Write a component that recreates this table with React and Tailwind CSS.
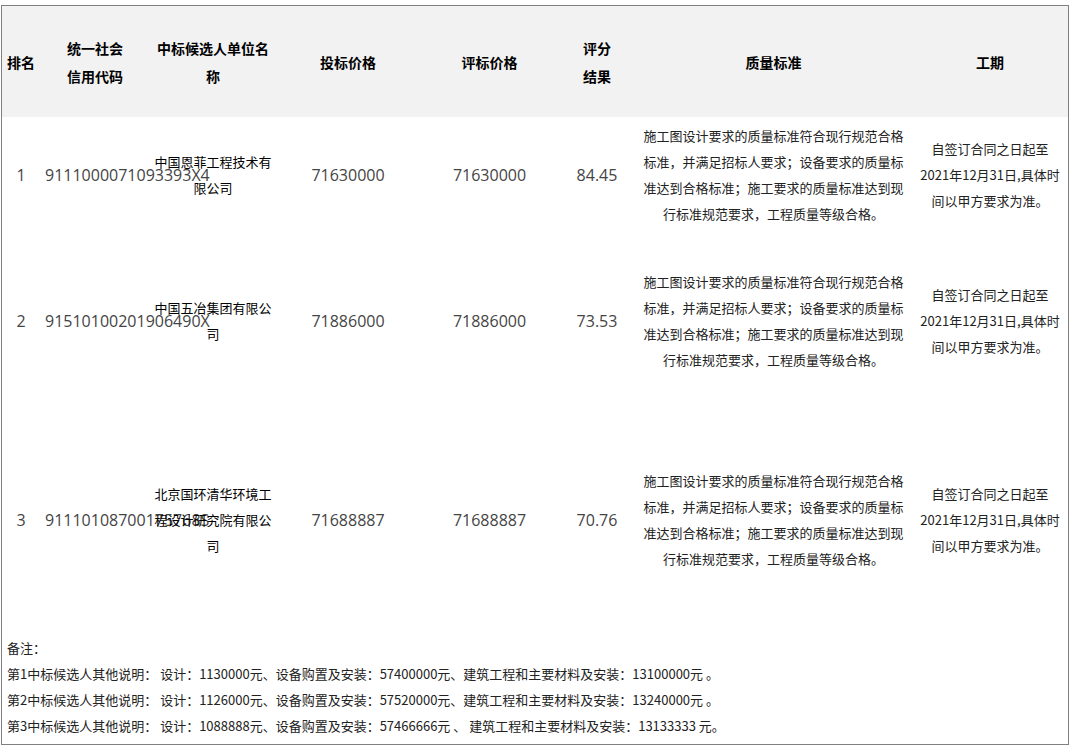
import React from "react";

const cols = ["w-[38px]", "w-[110px]", "w-[126px]", "w-[144px]", "w-[139px]", "w-[76px]", "w-[277px]", "w-[156px]"];

const quality = "施工图设计要求的质量标准符合现行规范合格标准，并满足招标人要求；设备要求的质量标准达到合格标准；施工要求的质量标准达到现行标准规范要求，工程质量等级合格。";
const periodLines = ["自签订合同之日起至", "2021年12月31日,具体时", "间以甲方要求为准。"];

const rows = [
  { rank: "1", code: "9111000071093393X4", name: "中国恩菲工程技术有限公司", bid: "71630000", eval: "71630000", score: "84.45", h: "h-[116px]" },
  { rank: "2", code: "91510100201906490X", name: "中国五冶集团有限公司", bid: "71886000", eval: "71886000", score: "73.53", h: "h-[176px]" },
  { rank: "3", code: "91110108700175768S", name: "北京国环清华环境工程设计研究院有限公司", bid: "71688887", eval: "71688887", score: "70.76", h: "h-[222px]" },
];

const numFont = { fontFamily: '"Open Sans", "Noto Sans CJK SC", sans-serif' };

function HeadCell({ w, children, inner }) {
  return (
    <div className={`${w} shrink-0 flex items-center justify-center`}>
      <div className={`${inner || ""} text-center font-bold text-[14px] leading-[28px] text-black`}>{children}</div>
    </div>
  );
}

export default function App() {
  return (
    <div className="bg-white w-[1073px] h-[749px] pt-[5px] pl-[1px]" style={{ fontFamily: '"Noto Sans CJK SC", "Noto Sans", sans-serif' }}>
      <div className="w-[1068px] h-[740px] border border-[#808080] flex flex-col">
        <div className="h-[111px] bg-[#f2f2f2] flex shrink-0">
          <HeadCell w={cols[0]}>排名</HeadCell>
          <HeadCell w={cols[1]} inner="w-[60px]">统一社会信用代码</HeadCell>
          <HeadCell w={cols[2]} inner="w-[120px]">中标候选人单位名称</HeadCell>
          <HeadCell w={cols[3]}>投标价格</HeadCell>
          <HeadCell w={cols[4]}>评标价格</HeadCell>
          <HeadCell w={cols[5]} inner="w-[36px]">评分结果</HeadCell>
          <HeadCell w={cols[6]}>质量标准</HeadCell>
          <HeadCell w={cols[7]}>工期</HeadCell>
        </div>
        {rows.map((r) => (
          <div key={r.rank} className={`${r.h} flex shrink-0`}>
            <div className={`${cols[0]} shrink-0 flex items-center justify-center text-[16px] text-[#444]`} style={numFont}>{r.rank}</div>
            <div className={`${cols[1]} shrink-0 flex items-center pl-[5px] text-[16px] text-[#444] whitespace-nowrap`} style={numFont}>{r.code}</div>
            <div className={`${cols[2]} shrink-0 flex items-center justify-center`}>
              <div className="w-[120px] text-center text-[13px] leading-[26px] text-black">{r.name}</div>
            </div>
            <div className={`${cols[3]} shrink-0 flex items-center justify-center text-[16px] text-[#444]`} style={numFont}>{r.bid}</div>
            <div className={`${cols[4]} shrink-0 flex items-center justify-center text-[16px] text-[#444]`} style={numFont}>{r.eval}</div>
            <div className={`${cols[5]} shrink-0 flex items-center justify-center text-[16px] text-[#444]`} style={numFont}>{r.score}</div>
            <div className={`${cols[6]} shrink-0 flex items-center justify-center`}>
              <div className="w-[264px] text-center text-[13px] leading-[26px] text-[#222]">{quality}</div>
            </div>
            <div className={`${cols[7]} shrink-0 flex items-center justify-center`}>
              <div className="w-[150px] text-center text-[13px] leading-[26px] text-[#222]">
                {periodLines.map((l) => (
                  <div key={l} className="whitespace-nowrap">{l}</div>
                ))}
              </div>
            </div>
          </div>
        ))}
        <div className="flex-1 pt-[4px] pl-[5px] text-[13px] leading-[26px] text-[#222]">
          <div>备注：</div>
          <div>第1中标候选人其他说明： 设计：1130000元、设备购置及安装：57400000元、建筑工程和主要材料及安装：13100000元 。</div>
          <div>第2中标候选人其他说明： 设计：1126000元、设备购置及安装：57520000元、建筑工程和主要材料及安装：13240000元 。</div>
          <div>第3中标候选人其他说明： 设计：1088888元、设备购置及安装：57466666元 、 建筑工程和主要材料及安装：13133333 元。</div>
        </div>
      </div>
    </div>
  );
}
